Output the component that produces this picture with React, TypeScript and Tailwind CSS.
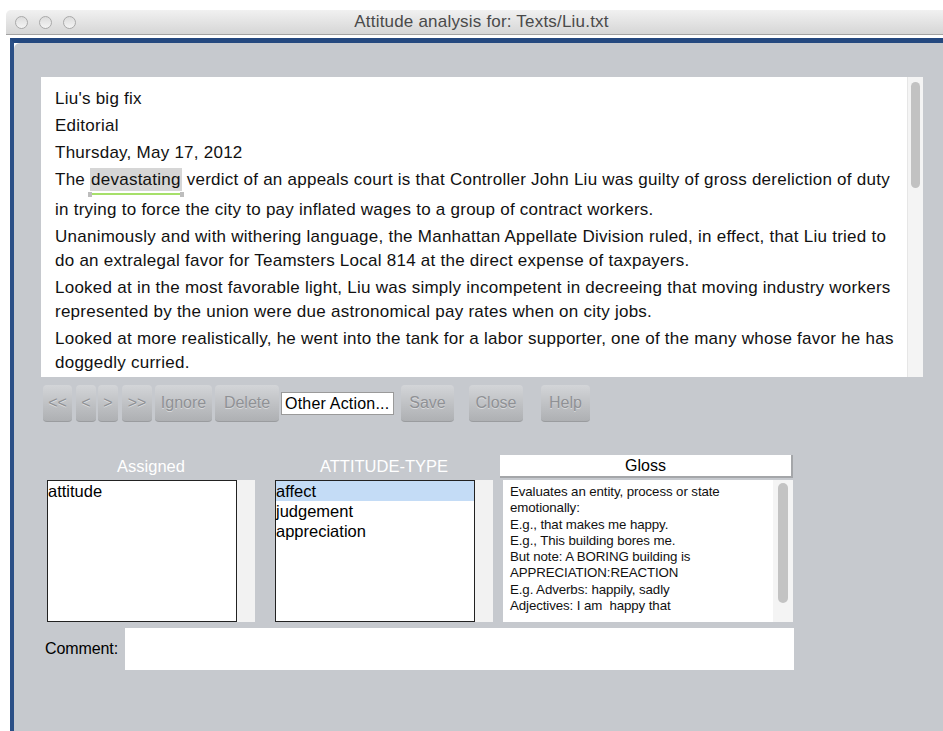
import React from 'react';

const paragraphs: string[] = [
    "Liu's big fix",
    'Editorial',
    'Thursday, May 17, 2012',
    '',
    'in trying to force the city to pay inflated wages to a group of contract workers.',
    'Unanimously and with withering language, the Manhattan Appellate Division ruled, in effect, that Liu tried to do an extralegal favor for Teamsters Local 814 at the direct expense of taxpayers.',
    'Looked at in the most favorable light, Liu was simply incompetent in decreeing that moving industry workers represented by the union were due astronomical pay rates when on city jobs.',
    'Looked at more realistically, he went into the tank for a labor supporter, one of the many whose favor he has doggedly curried.',
];

const glossLines = [
    'Evaluates an entity, process or state',
    'emotionally:',
    'E.g., that makes me happy.',
    'E.g., This building bores me.',
    'But note: A BORING building is',
    'APPRECIATION:REACTION',
    'E.g. Adverbs: happily, sadly',
    'Adjectives: I am  happy that',
];

const font = "font-['Liberation_Sans',Arial,sans-serif]";

const ToolButton: React.FC<{ label: string; w: string; ml?: string }> = ({ label, w, ml = 'ml-[3px]' }) => (
    <div
        className={`${w} ${ml} h-[37px] rounded-[4px] bg-gradient-to-b from-[#d3d5d8] to-[#aeb0b3] border-b border-[#9a9c9f] flex items-center justify-center text-[16px] text-[#8f9195] [text-shadow:0_1px_0_rgba(255,255,255,0.45)]`}
    >
        {label}
    </div>
);

const Scrollbar: React.FC<{ thumbTop: string; thumbH: string }> = ({ thumbTop, thumbH }) => (
    <div className="w-[16px] bg-[#f4f4f4] border-l border-[#e6e6e6] flex flex-col items-center">
        <div className={`${thumbTop} ${thumbH} w-[9px] rounded-full bg-[#c2c2c2]`} />
    </div>
);

const ListBox: React.FC<{ items: string[]; selected?: number; w: string }> = ({ items, selected, w }) => (
    <div className="flex h-[142px]">
        <div className={`${w} h-full bg-white border border-[#222] text-[16.5px] leading-[20px] text-black`}>
            {items.map((it, i) => (
                <div key={it} className={i === selected ? 'bg-[#c4dcf6]' : ''}>{it}</div>
            ))}
        </div>
        <div className="w-[18px] h-full bg-[#f2f2f2]" />
    </div>
);

export default function App() {
    return (
        <div className={`w-[943px] h-[731px] bg-white flex flex-col overflow-hidden ${font}`}>
            <div className="h-[10px]" />
            {/* window title bar */}
            <div className="ml-[6px] h-[25px] rounded-tl-[5px] bg-gradient-to-b from-[#f1f1f1] to-[#d6d6d6] border-b border-[#a3a3a3] flex items-center">
                <div className="flex gap-[11px] pl-[9px] w-[90px]">
                    <div className="w-[13px] h-[13px] rounded-full border border-[#a9a9a9] bg-gradient-to-b from-[#dcdcdc] to-[#f4f4f4]" />
                    <div className="w-[13px] h-[13px] rounded-full border border-[#a9a9a9] bg-gradient-to-b from-[#dcdcdc] to-[#f4f4f4]" />
                    <div className="w-[13px] h-[13px] rounded-full border border-[#a9a9a9] bg-gradient-to-b from-[#dcdcdc] to-[#f4f4f4]" />
                </div>
                <div className="flex-1 text-center text-[17px] tracking-[0.2px] text-[#4a4a4a] pr-[76px]">Attitude analysis for: Texts/Liu.txt</div>
            </div>
            <div className="h-[3px]" />

            {/* blue frame around the dialog */}
            <div className="flex-1 ml-[10px] border-t-[5px] border-l-[4px] border-t-[#24487f] border-l-[#2b4f86] flex flex-col">
                <div className="flex-1 bg-[#c6c9ce] rounded-tl-[6px] pl-[27px] pt-[34px] flex flex-col">
                    {/* article text */}
                    <div className="w-[882px] h-[300px] flex bg-white">
                        <div className="flex-1 pl-[14px] pr-[6px] pt-[10px] text-[17px] tracking-[0.25px] leading-[24px] text-[#111] overflow-hidden">
                            {paragraphs.map((p, i) =>
                                i === 3 ? (
                                    <p key={i} className="mb-[6px]">
                                        The{' '}
                                        <span className="relative bg-[#d6d6d6] px-[1px] py-[2px]">
                                            devastating
                                            <span className="absolute left-0 right-0 -bottom-[4px] h-[2px] bg-[#a6e06a]" />
                                            <span className="absolute -left-[2px] -bottom-[6px] w-[4px] h-[5px] bg-[#bdbdbd]" />
                                            <span className="absolute -right-[2px] -bottom-[6px] w-[4px] h-[5px] bg-[#bdbdbd]" />
                                        </span>{' '}
                                        verdict of an appeals court is that Controller John Liu was guilty of gross dereliction of duty
                                    </p>
                                ) : (
                                    <p key={i} className="mb-[3px]">{p}</p>
                                )
                            )}
                        </div>
                        <Scrollbar thumbTop="mt-[5px]" thumbH="h-[106px]" />
                    </div>

                    {/* toolbar */}
                    <div className="flex items-center mt-[8px] pl-[2px]">
                        <ToolButton label="<<" w="w-[29px]" ml="ml-0" />
                        <ToolButton label="<" w="w-[20px]" ml="ml-[4px]" />
                        <ToolButton label=">" w="w-[20px]" ml="ml-[2px]" />
                        <ToolButton label=">>" w="w-[30px]" ml="ml-[4px]" />
                        <ToolButton label="Ignore" w="w-[57px]" />
                        <ToolButton label="Delete" w="w-[64px]" />
                        <div className="ml-[2px] w-[113px] h-[23px] bg-white border border-[#9a9a9a] flex items-center pl-[3px] text-[16px] tracking-[0.2px] text-black whitespace-nowrap">
                            Other Action...
                        </div>
                        <ToolButton label="Save" w="w-[53px]" ml="ml-[7px]" />
                        <ToolButton label="Close" w="w-[54px]" ml="ml-[15px]" />
                        <ToolButton label="Help" w="w-[49px]" ml="ml-[18px]" />
                    </div>

                    {/* category lists */}
                    <div className="flex mt-[33px] pl-[6px]">
                        <div className="w-[208px] flex flex-col gap-[2px]">
                            <div className="h-[23px] flex items-center justify-center text-[16.5px] text-white">Assigned</div>
                            <ListBox items={['attitude']} w="w-[190px]" />
                        </div>
                        <div className="w-[218px] ml-[20px] flex flex-col gap-[2px]">
                            <div className="h-[23px] flex items-center justify-center text-[16.5px] text-white">ATTITUDE-TYPE</div>
                            <ListBox items={['affect', 'judgement', 'appreciation']} selected={0} w="w-[200px]" />
                        </div>
                        <div className="w-[293px] ml-[7px] flex flex-col gap-[2px]">
                            <div className="h-[23px] bg-white border-r-2 border-b-2 border-[#a4a6a9] flex items-center justify-center text-[16px] text-black">Gloss</div>
                            <div className="h-[142px] flex pl-[3px]">
                                <div className="flex-1 bg-white pl-[7px] pt-[4px] text-[13.3px] leading-[16.3px] tracking-[-0.1px] text-[#111]">
                                    {glossLines.map((l, i) => (
                                        <div key={i} className="whitespace-pre">{l}</div>
                                    ))}
                                </div>
                                <div className="w-[20px] bg-[#f4f4f4] flex justify-center">
                                    <div className="mt-[3px] h-[120px] w-[10px] rounded-full bg-[#c3c3c3]" />
                                </div>
                            </div>
                        </div>
                    </div>

                    {/* comment field */}
                    <div className="flex items-center mt-[6px] pl-[4px]">
                        <div className="w-[80px] text-[16px] text-black tracking-[-0.1px]">Comment:</div>
                        <div className="w-[669px] h-[42px] bg-white" />
                    </div>
                </div>
            </div>
        </div>
    );
}
